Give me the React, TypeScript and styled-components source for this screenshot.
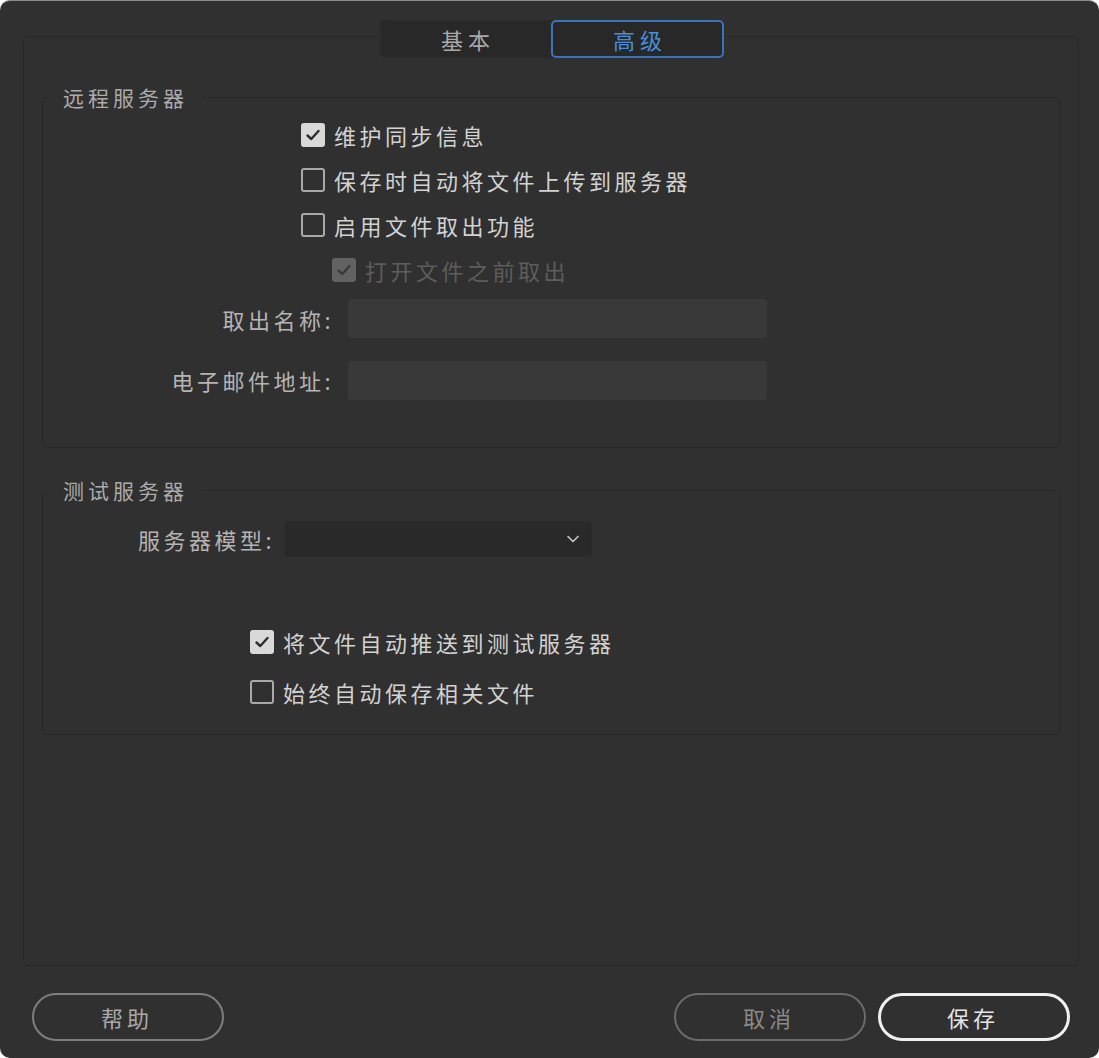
import React from "react";
import styled, { createGlobalStyle } from "styled-components";
import { ChevronDown } from "lucide-react";

const Global = createGlobalStyle`
  html, body { margin: 0; padding: 0; background: #ffffff; }
  body { font-family: "Noto Sans CJK SC", "Noto Sans", sans-serif; }
  * { box-sizing: border-box; }
`;

const Window = styled.div`
  width: 1099px;
  height: 1058px;
  background: #303030;
  border-radius: 10px;
  border-top: 1px solid #8a8a8a;
  display: flex;
  flex-direction: column;
  padding: 35px 20px 0 23px;
  overflow: hidden;
`;

const Panel = styled.div`
  height: 930px;
  border: 1px solid #282828;
  border-radius: 6px;
  display: flex;
  flex-direction: column;
  padding: 0 18px;
`;

const Tabs = styled.div`
  align-self: center;
  margin-top: -17px;
  margin-left: 2px;
  display: flex;
  background: #282828;
  border-radius: 5px;
`;

const Tab = styled.div<{ $active?: boolean }>`
  width: ${(p) => (p.$active ? 173 : 171)}px;
  height: 38px;
  display: flex;
  align-items: center;
  justify-content: center;
  font-size: 22px;
  letter-spacing: 5px;
  padding-left: 5px;
  color: ${(p) => (p.$active ? "#4a8ed6" : "#a9a9a9")};
  border: 2px solid ${(p) => (p.$active ? "#3a74b8" : "#2a2a2a")};
  border-radius: 5px;
  background: #282828;
`;

const Group = styled.fieldset<{ $height: number; $top: number }>`
  margin: ${(p) => p.$top}px 0 0 0;
  height: ${(p) => p.$height}px;
  border: 1px solid #272727;
  border-radius: 6px;
  padding: 0;
  min-width: 0;
  display: block;
`;

const Legend = styled.legend`
  margin-left: 6px;
  padding: 0 14px;
  font-size: 21px;
  letter-spacing: 4px;
  color: #ababab;
  line-height: 24px;
`;

const Body = styled.div`
  display: flex;
  flex-direction: column;
`;

const Gap = styled.div<{ $h: number }>`
  height: ${(p) => p.$h}px;
  flex: none;
`;

const CheckRow = styled.label<{ $indent: number; $disabled?: boolean; $height: number }>`
  display: flex;
  align-items: center;
  gap: 9px;
  height: ${(p) => p.$height}px;
  margin-left: ${(p) => p.$indent}px;
  font-size: 22px;
  letter-spacing: 3.5px;
  color: ${(p) => (p.$disabled ? "#5d5d5d" : "#d2d2d2")};
`;

const Box = styled.span<{ $checked?: boolean; $disabled?: boolean }>`
  width: 24px;
  height: 24px;
  border-radius: 3px;
  display: flex;
  align-items: center;
  justify-content: center;
  flex: none;
  background: ${(p) =>
    p.$checked ? (p.$disabled ? "#626262" : "#d9d9d9") : "transparent"};
  border: 2px solid
    ${(p) => (p.$checked ? (p.$disabled ? "#626262" : "#d9d9d9") : "#a9a9a9")};
`;

const FieldRow = styled.div<{ $labelWidth: number; $inputWidth: number; $height: number; $gap: number }>`
  display: grid;
  grid-template-columns: ${(p) => p.$labelWidth}px ${(p) => p.$inputWidth}px;
  column-gap: ${(p) => p.$gap}px;
  align-items: center;
  height: ${(p) => p.$height}px;
`;

const FieldLabel = styled.span`
  text-align: right;
  font-size: 22px;
  letter-spacing: 3.5px;
  color: #b4b4b4;
  white-space: nowrap;
`;

const TextInput = styled.div`
  height: 39px;
  background: #393939;
  border-radius: 4px;
`;

const Select = styled.div`
  height: 36px;
  background: #292929;
  border: 1px solid #2c2c2c;
  border-radius: 4px;
  display: flex;
  align-items: center;
  justify-content: flex-end;
  padding-right: 8px;
  color: #c4c4c4;
`;

const Footer = styled.div`
  display: flex;
  align-items: center;
  padding: 27px 9px 0 9px;
  gap: 12px;
`;

const Spacer = styled.div`
  flex: 1;
`;

const Button = styled.button<{ $variant?: "primary" | "muted" }>`
  width: 192px;
  height: 48px;
  border-radius: 24px;
  background: transparent;
  font-family: "Noto Sans CJK SC", "Noto Sans", sans-serif;
  font-size: 22px;
  letter-spacing: 4px;
  padding-left: 4px;
  color: ${(p) =>
    p.$variant === "primary" ? "#e4e4e4" : p.$variant === "muted" ? "#8a8a8a" : "#a9a9a9"};
  border: ${(p) =>
    p.$variant === "primary"
      ? "3px solid #f0f0f0"
      : p.$variant === "muted"
      ? "2px solid #6a6a6a"
      : "2px solid #7e7e7e"};
`;

const Check = ({ dark }: { dark: string }) => (
  <svg width="16" height="16" viewBox="0 0 16 16">
    <path d="M2.5 8.5 L6.3 12 L13.5 4" fill="none" stroke={dark} strokeWidth="2.4" strokeLinecap="round" strokeLinejoin="round" />
  </svg>
);

const CheckItem = ({
  text,
  checked,
  disabled,
  indent,
  height = 45,
}: {
  text: string;
  checked?: boolean;
  disabled?: boolean;
  indent: number;
  height?: number;
}) => (
  <CheckRow $indent={indent} $disabled={disabled} $height={height}>
    <Box $checked={checked} $disabled={disabled}>
      {checked && <Check dark={disabled ? "#3a3a3a" : "#2e2e2e"} />}
    </Box>
    {text}
  </CheckRow>
);

export default function App() {
  return (
    <>
      <Global />
      <Window>
        <Panel>
          <Tabs>
            <Tab>基本</Tab>
            <Tab $active>高级</Tab>
          </Tabs>
          <Group $top={27} $height={363}>
            <Legend>远程服务器</Legend>
            <Body>
              <Gap $h={3} />
              <CheckItem indent={258} checked text="维护同步信息" />
              <CheckItem indent={258} text="保存时自动将文件上传到服务器" />
              <CheckItem indent={258} text="启用文件取出功能" />
              <CheckItem indent={289} checked disabled text="打开文件之前取出" />
              <FieldRow $labelWidth={291} $inputWidth={419} $height={53} $gap={14}>
                <FieldLabel>取出名称:</FieldLabel>
                <TextInput />
              </FieldRow>
              <Gap $h={15} />
              <FieldRow $labelWidth={291} $inputWidth={419} $height={40} $gap={14}>
                <FieldLabel>电子邮件地址:</FieldLabel>
                <TextInput />
              </FieldRow>
            </Body>
          </Group>
          <Group $top={30} $height={257}>
            <Legend>测试服务器</Legend>
            <Body>
              <Gap $h={19} />
              <FieldRow $labelWidth={232} $inputWidth={308} $height={36} $gap={9}>
                <FieldLabel>服务器模型:</FieldLabel>
                <Select>
                  <ChevronDown size={20} strokeWidth={2} />
                </Select>
              </FieldRow>
              <Gap $h={60} />
              <CheckItem indent={207} checked text="将文件自动推送到测试服务器" height={50} />
              <CheckItem indent={207} text="始终自动保存相关文件" height={50} />
            </Body>
          </Group>
        </Panel>
        <Footer>
          <Button>帮助</Button>
          <Spacer />
          <Button $variant="muted">取消</Button>
          <Button $variant="primary">保存</Button>
        </Footer>
      </Window>
    </>
  );
}
